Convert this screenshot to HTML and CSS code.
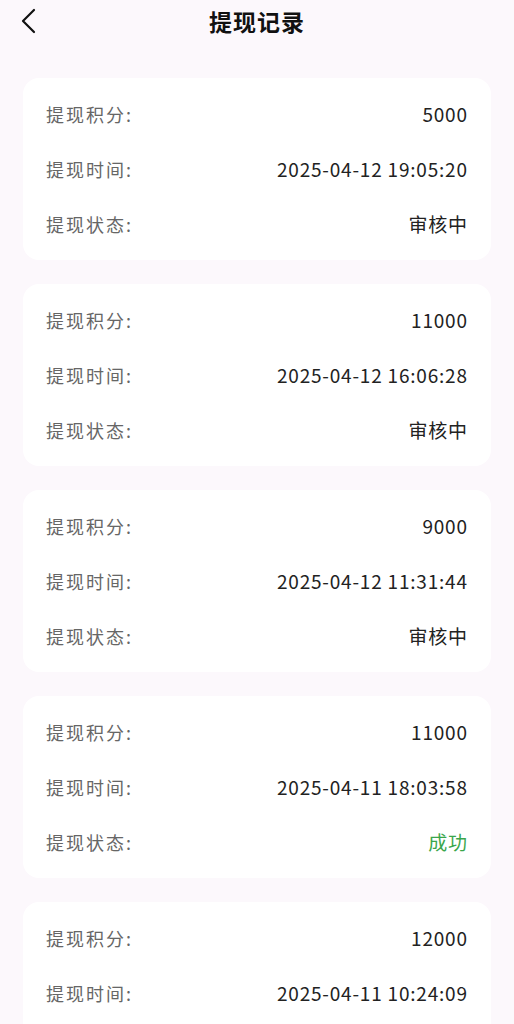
FILE: index.html
```html
<!DOCTYPE html>
<html lang="zh-CN">
<head>
<meta charset="utf-8">
<title>提现记录</title>
<link rel="stylesheet" href="styles.css">
</head>
<body>
<header class="nav">
  <span class="back"><svg width="16" height="26" viewBox="0 0 16 26"><path d="M13 2 L2 13 L13 24" fill="none" stroke="#111" stroke-width="2.2" stroke-linecap="round" stroke-linejoin="round"/></svg></span>
  <h1 class="title">提现记录</h1>
</header>
<main class="list">
  <section class="card">
    <div class="row"><span class="label">提现积分:</span><span class="value">5000</span></div>
    <div class="row"><span class="label">提现时间:</span><span class="value">2025-04-12 19:05:20</span></div>
    <div class="row"><span class="label">提现状态:</span><span class="value">审核中</span></div>
  </section>
  <section class="card">
    <div class="row"><span class="label">提现积分:</span><span class="value">11000</span></div>
    <div class="row"><span class="label">提现时间:</span><span class="value">2025-04-12 16:06:28</span></div>
    <div class="row"><span class="label">提现状态:</span><span class="value">审核中</span></div>
  </section>
  <section class="card">
    <div class="row"><span class="label">提现积分:</span><span class="value">9000</span></div>
    <div class="row"><span class="label">提现时间:</span><span class="value">2025-04-12 11:31:44</span></div>
    <div class="row"><span class="label">提现状态:</span><span class="value">审核中</span></div>
  </section>
  <section class="card">
    <div class="row"><span class="label">提现积分:</span><span class="value">11000</span></div>
    <div class="row"><span class="label">提现时间:</span><span class="value">2025-04-11 18:03:58</span></div>
    <div class="row"><span class="label">提现状态:</span><span class="value success">成功</span></div>
  </section>
  <section class="card">
    <div class="row"><span class="label">提现积分:</span><span class="value">12000</span></div>
    <div class="row"><span class="label">提现时间:</span><span class="value">2025-04-11 10:24:09</span></div>
    <div class="row"><span class="label">提现状态:</span><span class="value">审核中</span></div>
  </section>
</main>
</body>
</html>
```
FILE: styles.css
```css
* { box-sizing: border-box; }
html, body { margin: 0; padding: 0; }
body {
  background: #fcf8fc;
  font-family: "Noto Sans CJK SC", "Noto Sans", sans-serif;
  color: #222;
  width: 514px;
  height: 1024px;
  overflow: hidden;
}
.nav {
  position: relative;
  height: 44px;
  display: flex;
  align-items: center;
  justify-content: center;
}
.back {
  position: absolute;
  left: 21px;
  top: 8px;
  display: flex;
}
.title {
  margin: 0 0 3px;
  font-size: 23px;
  font-weight: 700;
  letter-spacing: 1px;
  color: #111;
  line-height: 30px;
}
.list {
  padding: 34px 23px 0;
  display: flex;
  flex-direction: column;
  gap: 24px;
}
.card {
  background: #fff;
  border-radius: 16px;
  padding: 8px 24px 9px 23px;
  display: flex;
  flex-direction: column;
}
.row {
  height: 55px;
  display: flex;
  align-items: center;
  justify-content: space-between;
}
.label {
  color: #666;
  font-size: 18px;
  letter-spacing: 2px;
}
.value {
  color: #222;
  font-size: 19px;
  letter-spacing: 0.8px;
  margin-right: -0.8px;
}
.success { color: #3aa64b; }
```
